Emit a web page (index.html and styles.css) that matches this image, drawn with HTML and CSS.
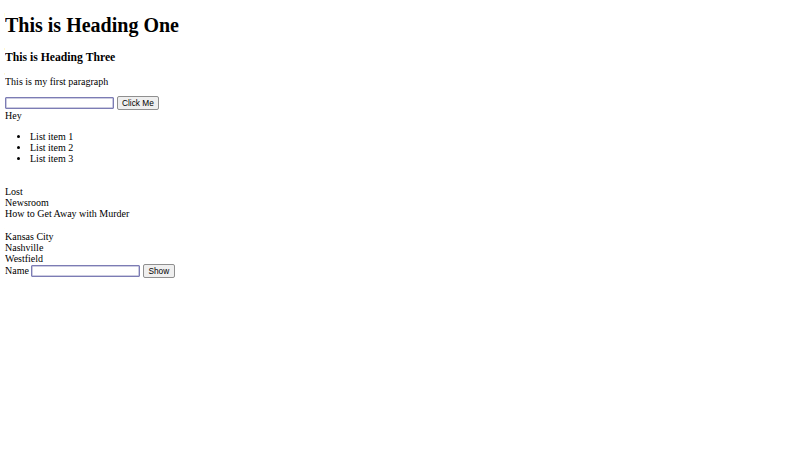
FILE: index.html
```html
<!DOCTYPE html>
<html>
<head>
<meta charset="utf-8">
<link rel="stylesheet" href="styles.css">
</head>
<body>
<h1>This is Heading One</h1>
<h3>This is Heading Three</h3>
<p>This is my first paragraph</p>
<div class="row"><input type="text" class="field"> <button class="btn">Click Me</button></div>
<div>Hey</div>
<ul class="list">
<li>List item 1</li>
<li>List item 2</li>
<li>List item 3</li>
</ul>
<div class="shows">Lost<br>Newsroom<br>How to Get Away with Murder</div>
<div class="cities">Kansas City<br>Nashville<br>Westfield</div>
<div class="row">Name <input type="text" class="field"> <button class="btn">Show</button></div>
</body>
</html>
```
FILE: styles.css
```css
body {
  margin: 5px;
  font-family: "Liberation Serif", serif;
  font-size: 10px;
  line-height: 11px;
  color: #000;
  background: #fff;
}
h1 {
  font-size: 20px;
  line-height: 23px;
  margin: 9px 0 14px;
}
h3 {
  font-size: 11.7px;
  line-height: 13px;
  margin: 12px 0;
}
p {
  margin: 10px 0 9px;
}
.list {
  margin: 10px 0 0;
  padding-left: 25px;
}
.shows {
  margin-top: 22px;
}
.cities {
  margin-top: 12px;
}
.field {
  font-family: "Liberation Sans", sans-serif;
  font-size: 8.3px;
  width: 105px;
  height: 8px;
  padding: 1px 1px;
  margin: 0;
  border: 1px solid #7c7cb4;
  box-shadow: inset 0 0 0 0.5px #9a9ac4;
  border-radius: 1px;
  vertical-align: baseline;
}
.btn {
  font-family: "Liberation Sans", sans-serif;
  font-size: 8.3px;
  padding: 1px 4.5px;
  margin: 0;
  border: 1px solid #8f8f8f;
  border-radius: 2px;
  background: #efefef;
}
```
